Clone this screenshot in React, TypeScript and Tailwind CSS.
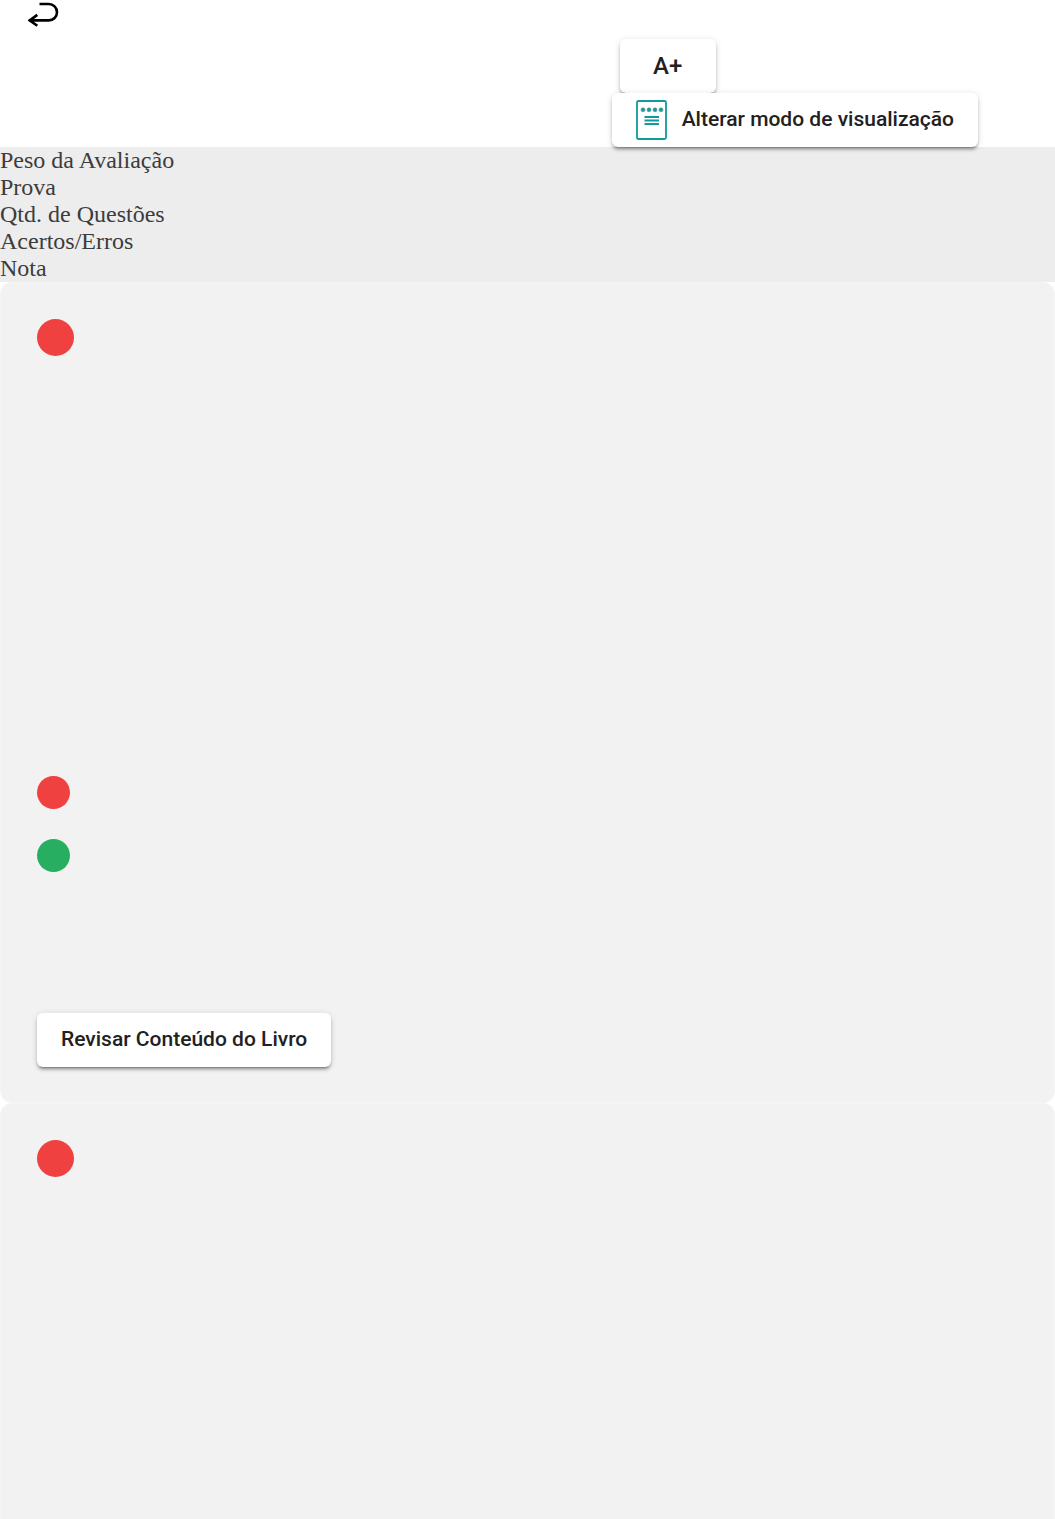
import type { ReactNode } from "react";

interface StatusDotProps {
  correct?: boolean;
  large?: boolean;
}

const resumo = [
  "Peso da Avaliação",
  "Prova",
  "Qtd. de Questões",
  "Acertos/Erros",
  "Nota",
];

const buttonClass =
  "flex h-[54px] min-w-24 items-center justify-center rounded-md bg-white px-6 font-['Roboto',sans-serif] font-medium text-[#212121] shadow-[0_4px_2px_-3px_rgba(0,0,0,0.3),0_3px_3px_0_rgba(0,0,0,0.22),0_1px_7px_0_rgba(0,0,0,0.12)]";

function StatusDot({ correct, large }: StatusDotProps) {
  return (
    <div
      className={`rounded-full ${large ? "size-[37px]" : "size-[33px]"} ${
        correct ? "bg-[#27ae60]" : "bg-[#f04141]"
      }`}
    />
  );
}

function BackIcon() {
  return (
    <svg
      className="h-[25px] w-8"
      viewBox="0 0 32 25"
      fill="none"
      stroke="currentColor"
      strokeWidth="2.6"
    >
      <path d="M11.5 2h9.3a8.2 8.2 0 0 1 0 16.4H2" />
      <path d="M9.3 12.9 1.8 18.4l7.5 5.4" />
      <path d="M0 18.4 6 14.6v7.6z" fill="currentColor" stroke="none" />
    </svg>
  );
}

function NotepadIcon() {
  return (
    <svg
      className="h-10 w-[31px] shrink-0"
      viewBox="0 0 31 40"
      fill="none"
      stroke="#109a9a"
    >
      <rect x="1" y="1" width="29" height="38" rx="1.5" strokeWidth="1.8" />
      <g fill="#109a9a" stroke="#5a9292" strokeWidth="0.6">
        <circle cx="7" cy="9.8" r="2" />
        <circle cx="13" cy="9.8" r="2" />
        <circle cx="19" cy="9.8" r="2" />
        <circle cx="25" cy="9.8" r="2" />
      </g>
      <path d="M8.5 17h14.5M8.5 20.5h14.5M8.5 24h14.5" strokeWidth="1.8" />
    </svg>
  );
}

function QuestionCard({ children }: { children: ReactNode }) {
  return (
    <section className="rounded-xl border border-[#f5f5f5] bg-[#f2f2f2] px-9 pt-9 pb-[35px] last:grow last:rounded-b-none last:border-b-0">
      {children}
    </section>
  );
}

export default function App() {
  return (
    <div className="flex min-h-screen flex-col bg-white">
      <header className="flex items-start justify-between pr-[77px] pl-7">
        <button type="button" aria-label="Voltar" className="pt-0.5 text-black">
          <BackIcon />
        </button>

        <div className="z-10 flex flex-col items-start pt-[39px]">
          <div className="pl-2">
            <button type="button" className={`${buttonClass} text-2xl`}>
              A+
            </button>
          </div>
          <button
            type="button"
            className={`${buttonClass} relative gap-[15px] text-[21px]`}
          >
            <NotepadIcon />
            Alterar modo de visualização
          </button>
        </div>
      </header>

      <ul className="bg-[#ededed] font-['Liberation_Serif',serif] text-2xl/[27px] text-[#3c3c3c]">
        {resumo.map((item) => (
          <li key={item}>{item}</li>
        ))}
      </ul>

      <main className="flex grow flex-col">
        <QuestionCard>
          <StatusDot large />

          {/* Answer options */}
          <div className="mt-[420px] flex flex-col gap-[30px]">
            <StatusDot />
            <StatusDot correct />
          </div>

          <button
            type="button"
            className={`${buttonClass} mt-[141px] text-[21px]`}
          >
            Revisar Conteúdo do Livro
          </button>
        </QuestionCard>

        <QuestionCard>
          <StatusDot large />
        </QuestionCard>
      </main>
    </div>
  );
}
